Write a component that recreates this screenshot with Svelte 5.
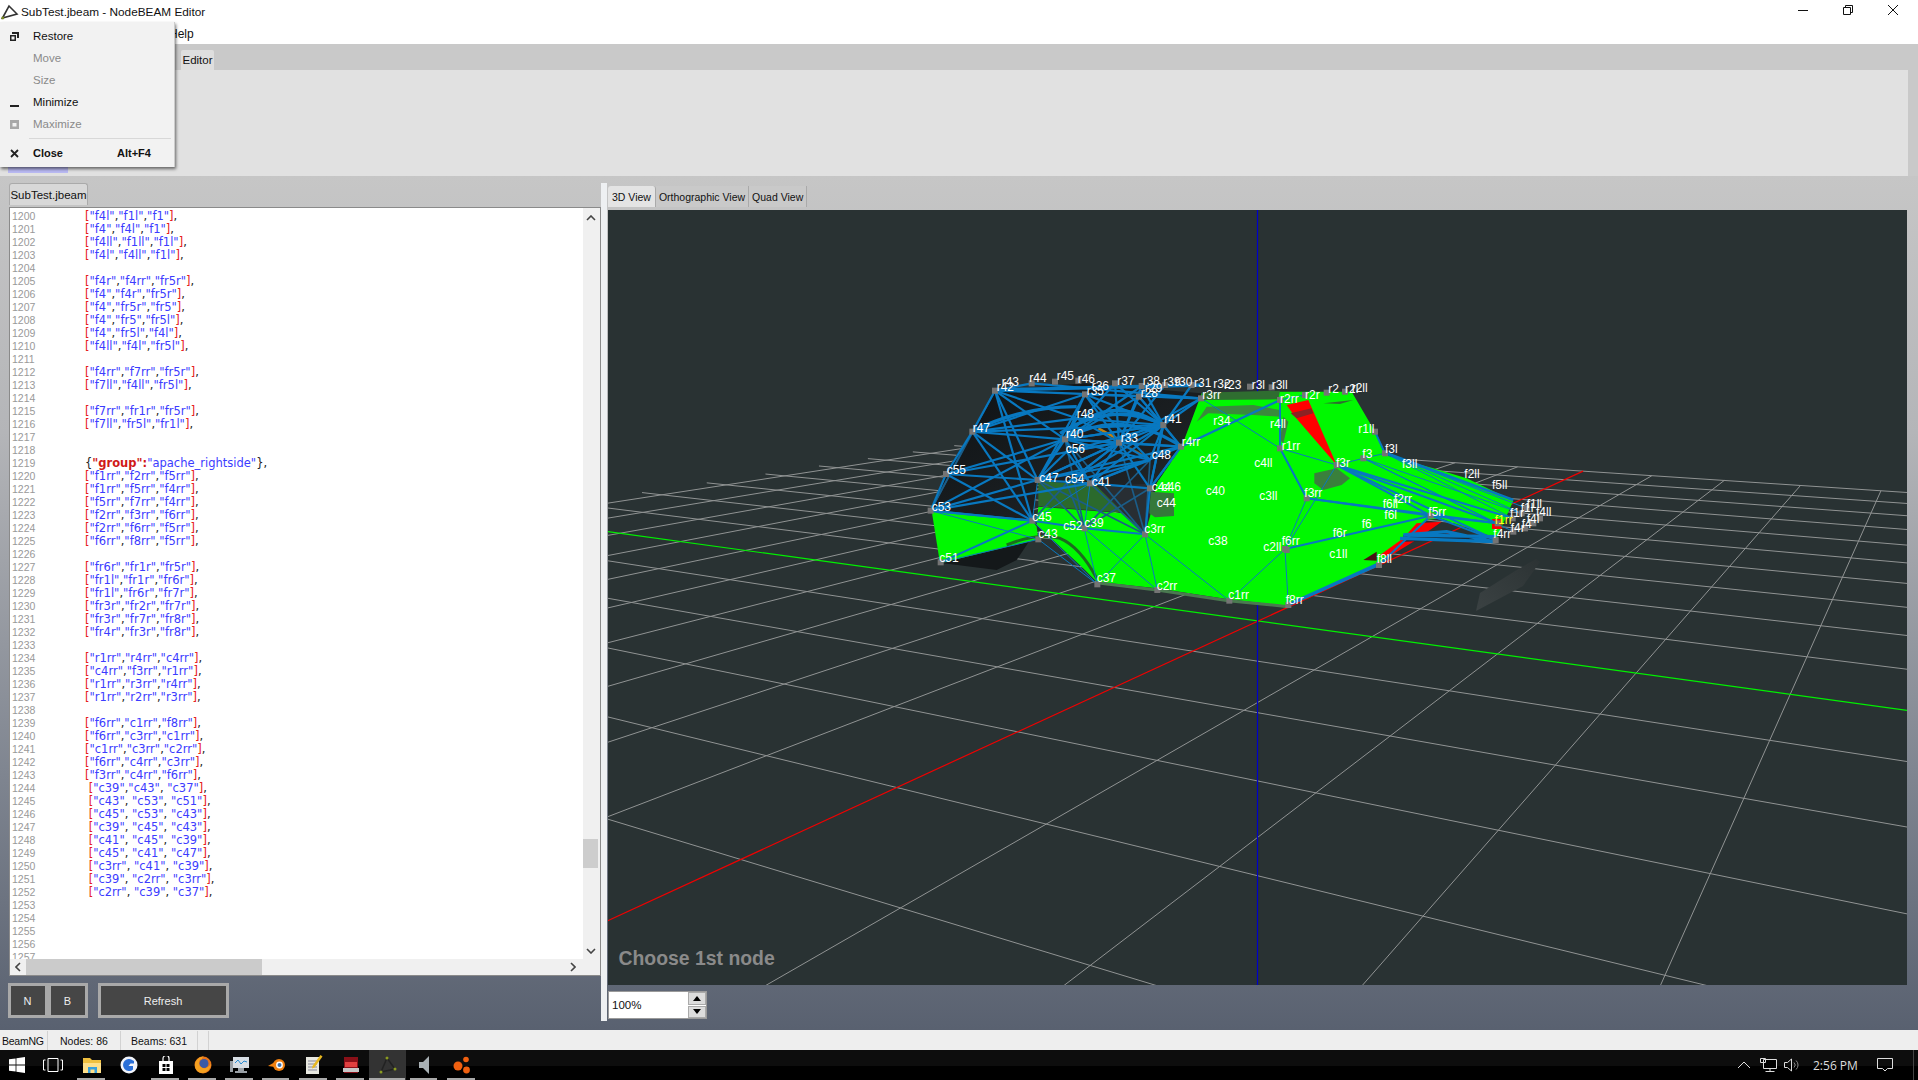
<script>
  const codeSrc = `["f4l","f1l","f1"],
["f4","f4l","f1"],
["f4ll","f1ll","f1l"],
["f4l","f4ll","f1l"],

["f4r","f4rr","fr5r"],
["f4","f4r","fr5r"],
["f4","fr5r","fr5"],
["f4","fr5","fr5l"],
["f4","fr5l","f4l"],
["f4ll","f4l","fr5l"],

["f4rr","f7rr","fr5r"],
["f7ll","f4ll","fr5l"],

["f7rr","fr1r","fr5r"],
["f7ll","fr5l","fr1l"],


{"group":"apache_rightside"},
["f1rr","f2rr","f5rr"],
["f1rr","f5rr","f4rr"],
["f5rr","f7rr","f4rr"],
["f2rr","f3rr","f6rr"],
["f2rr","f6rr","f5rr"],
["f6rr","f8rr","f5rr"],

["fr6r","fr1r","fr5r"],
["fr1l","fr1r","fr6r"],
["fr1l","fr6r","fr7r"],
["fr3r","fr2r","fr7r"],
["fr3r","fr7r","fr8r"],
["fr4r","fr3r","fr8r"],

["r1rr","r4rr","c4rr"],
["c4rr","f3rr","r1rr"],
["r1rr","r3rr","r4rr"],
["r1rr","r2rr","r3rr"],

["f6rr","c1rr","f8rr"],
["f6rr","c3rr","c1rr"],
["c1rr","c3rr","c2rr"],
["f6rr","c4rr","c3rr"],
["f3rr","c4rr","f6rr"],
 ["c39","c43", "c37"],
 ["c43", "c53", "c51"],
 ["c45", "c53", "c43"],
 ["c39", "c45", "c43"],
 ["c41", "c45", "c39"],
 ["c45", "c41", "c47"],
 ["c3rr", "c41", "c39"],
 ["c39", "c2rr", "c3rr"],
 ["c2rr", "c39", "c37"],




`;
  function tokens(s) {
    const out = [];
    const re = /("group":)|(\[|\])|("[^"]*")|([^\[\]"]+)/g;
    let m;
    while ((m = re.exec(s))) {
      if (m[1]) out.push(['grp', m[1]]);
      else if (m[2]) out.push(['br', m[2]]);
      else if (m[3]) out.push(['str', m[3]]);
      else out.push(['pl', m[4]]);
    }
    return out;
  }
  const rows = codeSrc.split('\n').map((t, k) => ({ n: 1200 + k, t: tokens(t) }));

  // ground plane projection, page pixels
  const ci = -0.08423, cj = -0.04558, bi = -165.85, bj = 51.46, di = -24.7, dj = -13.33;
  const P = (i, j) => {
    const w = 1 + ci * i + cj * j;
    return [(1258 + bi * i + bj * j) / w, (621 + di * i + dj * j) / w];
  };
  const seg = (f, a, b) => {
    const p = f(a), q = f(b);
    return { x1: p[0], y1: p[1], x2: q[0], y2: q[1] };
  };
  const minW = 0.07;
  function iLine(i) {
    let end = 10;
    const wEnd = 1 + ci * i + cj * end;
    if (wEnd < minW) end = (minW - 1 - ci * i) / cj;
    return seg((j) => P(i, j), -10.4, end);
  }
  function jLine(j) {
    let end = 10;
    const wEnd = 1 + ci * end + cj * j;
    if (wEnd < minW) end = (minW - 1 - cj * j) / ci;
    return seg((i) => P(i, j), -10, end);
  }
  const grid = [];
  for (let k = -10; k <= 10; k++) {
    if (k !== 0) {
      grid.push(iLine(k));
      grid.push(jLine(k));
    }
  }
  const greenAxis = iLine(0);
  const redAxis = jLine(0);

  // car, in units of 1/3 px from (900,350)
  const N = {
    r42:[285,122], r47:[217,245], c55:[138,372], c53:[92,482], c51:[122,637], c45:[397,512], c43:[415,568],
    c47:[413,390], r40:[495,268], r33:[657,278], r41:[790,225], r4rr:[843,290], c41:[570,400], c46:[750,415],
    c3rr:[735,553], c39:[553,535], c37:[592,703], c2rr:[772,720], c1rr:[988,752], f8rr:[1165,765], f6rr:[1155,597],
    f3rr:[1220,445], r1rr:[1140,295], r2rr:[1140,150], r3rr:[903,145], r35:[555,133], r28:[717,140], f3r:[1310,345],
    f5rr:[1592,497], f8ll:[1437,645], f4rr:[1787,570], f1:[1793,520], f3l:[1455,310], f3:[1390,325], f4:[1875,535],
    f4r:[1840,545], f4l:[1900,520], f4ll:[1920,505], f1l:[1865,490], f1ll:[1880,475], f1r:[1838,505], r44:[395,100],
    r45:[465,95], r46:[535,92], r37:[645,100], r30:[795,105], r31:[875,105], r3l:[1050,110], r3ll:[1115,112],
    r2r:[1215,135], r2:[1280,128], r2l:[1335,125], r1ll:[1425,245], c2ll:[1160,600], r38:[725,108],
    c48:[750,330], c54:[500,400], c56:[500,305], r48:[530,205]
  };
  const thick = [
    'r42-r3rr','r42-r47','r47-c55','c55-c53','r47-r40','r47-c47','r42-c47','r42-r40','r47-c45','c55-r40','c55-c47','c55-c45',
    'c53-c47','c53-r40','c53-c45','c47-r40','r35-r47','r35-c47','r35-r40','r35-r33','r40-r33','r40-c41','r40-r41','r40-r4rr',
    'r33-r41','r33-r4rr','r33-c41','r33-c46','r33-r28','r33-c47','r41-r4rr','r41-c41','r41-r40','r4rr-c46','r4rr-c41','r4rr-c47',
    'r28-r41','r28-r40','r28-r4rr','r35-r41','r3rr-r33','r3rr-r41','c47-r33','c47-c41','c41-c46','c46-r41','r42-c45','r4rr-r2rr',
    'r35-r3rr','r44-r42','r44-r3rr','r41-c46','r33-r37','r33-r38','r33-r30','r41-r37','r41-r38','r41-r31','r40-r37','r40-r38',
    'r40-r48','r48-r41','r48-r33','r48-c47','c56-r33','c56-r41','c56-c41','c56-c47','c48-r33','c48-r40','c48-r41','c48-c41','c48-c47',
    'c48-r35','c54-r33','c54-r41','c54-c48','r33-c54','r47-r48','r42-r48','r47-r41','c55-r33','c53-c41'
  ];
  const dim = [
    'c47-c3rr','c41-c3rr','c46-c3rr','r33-c3rr','r40-c39','r40-c3rr','c48-c3rr','c48-c39','c54-c39','c46-c39','c47-c39','r42-c53','r47-c53','c54-c45'
  ];
  const thin = [
    'c53-c43','c51-c45','c51-c43','c45-c37','c43-c37','c39-c2rr','c39-c37','c3rr-c37','c3rr-c2rr','c3rr-c1rr','c1rr-f6rr','f6rr-f8rr',
    'f6rr-f3rr','f3rr-r1rr','r1rr-r2rr','r1rr-f3r','r3rr-r1rr','f3r-f6rr','c47-c45','c41-c39','c41-c45','f3-f3r','f3-f3l',
    'f3l-r1ll','f3l-f1ll','f3l-f1l','f3-f1','f3-f1l','f3-f4r','f3l-f1r','r2rr-r2r'
  ];
  const bold = [
    'c53-c45','c45-c39','c39-c3rr','c51-c45','f6rr-f5rr','f3rr-f5rr','f3rr-f1','r1rr-f3rr','r2rr-r1rr','f3r-f5rr','f3r-f1','f3r-f4rr','f3r-f1r',
    'f5rr-f4rr','f5rr-f1','f8rr-f8ll','f8ll-f5rr','r1ll-f3l','c3rr-c46','c46-r4rr'
  ];
  const edge = (e) => {
    const [a, b] = e.split('-');
    return { x1: N[a][0], y1: N[a][1], x2: N[b][0], y2: N[b][1] };
  };
  const hidden = ['c48', 'c54', 'c56', 'r48'];
  const nodeKeys = Object.keys(N).filter((k) => !hidden.includes(k));

  const labels = [
    ['r43',305,95],['r42',290,110],['r44',388,82],['r45',470,78],['r46',533,85],['r36',575,107],['r35',560,122],['r37',652,92],
    ['r38',728,92],['r29',735,112],['r28',722,128],['r39',790,95],['r30',825,95],['r31',882,97],['r32',940,100],['r23',972,103],
    ['r3l',1055,103],['r3ll',1115,105],['r3rr',907,133],['r2rr',1140,147],['r2r',1215,133],['r2',1285,117],['r2l',1335,115],['r2ll',1355,113],
    ['r48',530,190],['r41',793,205],['r47',218,232],['r40',498,250],['r33',662,262],['r34',940,213],['r4ll',1110,222],['r4rr',845,275],
    ['r1rr',1145,288],['c56',497,295],['c48',755,314],['c42',898,325],['c4ll',1063,338],['f3r',1308,338],['c55',140,358],['c47',418,382],
    ['c54',495,385],['c41',575,395],['c44',770,458],['c44',755,410],['c46',785,410],['c40',917,422],['c3ll',1078,437],['f3rr',1213,428],
    ['c53',95,470],['c45',397,500],['c43',415,552],['c52',490,527],['c39',553,518],['c3rr',733,535],['c38',925,571],['f6rr',1145,571],
    ['c2ll',1090,590],['f6r',1298,549],['c1ll',1288,610],['c51',118,623],['c37',590,683],['c2rr',770,706],['c1rr',985,733],['f8rr',1157,748],
    ['r1ll',1375,235],['f3l',1455,297],['f3',1387,310],['f3ll',1506,340],['f2ll',1693,370],['f5ll',1776,405],['f2rr',1482,445],['f6ll',1448,462],
    ['f6l',1453,493],['f5rr',1585,485],['f6',1385,520],['f1ll',1880,462],['f1l',1862,472],['f1r',1830,487],['f4ll',1908,485],['f4l',1880,505],
    ['f4',1865,520],['f4r',1832,532],['f4rr',1780,550],['f8ll',1430,625]
  ];

  const menu = [
    { t: 'Restore', on: true, ic: 'restore' },
    { t: 'Move', on: false, ic: '' },
    { t: 'Size', on: false, ic: '' },
    { t: 'Minimize', on: true, ic: 'min' },
    { t: 'Maximize', on: false, ic: 'max' }
  ];
  const marks = [[77,19],[96,9],[151,28],[188,28],[225,28],[262,27],[299,28],[336,28],[369,36],[410,27],[447,28]];
</script>

<div class="win">
  <header class="title">
    <svg class="appicon" viewBox="0 0 18 16" width="18" height="16">
      <path d="M1.5 14 L8 2 L16 10 Z" fill="none" stroke="#333" stroke-width="1.6"/>
      <circle cx="1.8" cy="14" r="1.4" fill="#7a8a20"/>
    </svg>
    <span class="ttext">SubTest.jbeam - NodeBEAM Editor</span>
    <div class="wbtns">
      <svg viewBox="0 0 12 12" width="12" height="12"><path d="M1 6.5h10" stroke="#111"/></svg>
      <svg viewBox="0 0 12 12" width="12" height="12"><path d="M1.5 3.5h7v7h-7zM3.5 3.5v-2h7v7h-2" fill="none" stroke="#111"/></svg>
      <svg viewBox="0 0 12 12" width="12" height="12"><path d="M1 1l10 10M11 1L1 11" stroke="#111"/></svg>
    </div>
  </header>
  <nav class="menubar"><span>Help</span></nav>
  <div class="toptabs"><span class="toptab">Editor</span></div>
  <div class="ribbon"><i class="lilac"></i></div>

  <main class="main">
    <section class="left">
      <div class="doctabs"><span class="doctab">SubTest.jbeam</span></div>
      <div class="editor">
        <div class="editmain">
          <div class="code">
            {#each rows as r}
              <div class="row"><span class="ln">{r.n}</span><span class="src">{#each r.t as s}<span class={s[0]}>{s[1]}</span>{/each}</span></div>
            {/each}
          </div>
          <div class="vbar">
            <svg viewBox="0 0 10 6" width="10" height="6"><path d="M1 5l4-4 4 4" fill="none" stroke="#444" stroke-width="1.6"/></svg>
            <i class="vspace"></i>
            <i class="vthumb"></i>
            <i class="vend"></i>
            <svg viewBox="0 0 10 6" width="10" height="6"><path d="M1 1l4 4 4-4" fill="none" stroke="#444" stroke-width="1.6"/></svg>
          </div>
        </div>
        <div class="hbar">
          <svg viewBox="0 0 6 10" width="6" height="10"><path d="M5 1L1 5l4 4" fill="none" stroke="#444" stroke-width="1.6"/></svg>
          <i class="hthumb"></i>
          <svg viewBox="0 0 6 10" width="6" height="10"><path d="M1 1l4 4-4 4" fill="none" stroke="#444" stroke-width="1.6"/></svg>
        </div>
      </div>
      <div class="actions">
        <div class="nb"><button>N</button><button>B</button></div>
        <button class="refresh">Refresh</button>
      </div>
    </section>
    <div class="split"></div>
    <section class="right">
      <div class="viewtabs">
        <span class="vt active">3D View</span><span class="vt">Orthographic View</span><span class="vt">Quad View</span>
      </div>
      <div class="viewport">
        <svg class="scene" viewBox="608 210 1299 775" width="1299" height="775">
          <defs>
            <linearGradient id="hull" x1="0" y1="0" x2="1" y2="1">
              <stop offset="0" stop-color="#0e1214"/><stop offset="0.6" stop-color="#1b1f22"/><stop offset="1" stop-color="#262c30"/>
            </linearGradient>
            <linearGradient id="shade" x1="0" y1="1" x2="1" y2="0">
              <stop offset="0" stop-color="#3b4243"/><stop offset="1" stop-color="#2c3334"/>
            </linearGradient>
          </defs>
          {#each grid as l}
            <line class="gl" x1={l.x1} y1={l.y1} x2={l.x2} y2={l.y2}/>
          {/each}
          <line class="ax" stroke="#00f000" x1={greenAxis.x1} y1={greenAxis.y1} x2={greenAxis.x2} y2={greenAxis.y2}/>
          <line class="ax" stroke="#f00000" x1={redAxis.x1} y1={redAxis.y1} x2={redAxis.x2} y2={redAxis.y2}/>
          <line class="ax" stroke="#0000c8" x1="1257.5" y1="210" x2="1257.5" y2="985"/>
          <polygon points="1480,593 1515,571 1536,559 1540,562 1523,586 1476,611" fill="url(#shade)"/>

          <g transform="translate(900 350) scale(0.33333)">
            <polygon points="130,640 320,580 390,570 350,630 290,660" fill="#14181a"/>
            <polygon points="285,120 555,100 905,130 845,290 770,400 735,550 670,490 590,410 415,390 395,510 95,482 135,370 215,245" fill="url(#hull)"/>
            <polygon points="590,410 770,400 735,550 670,490" fill="#282e33"/>
            <polygon points="95,482 395,510 410,530 415,568 120,640" fill="#00f800"/>
            <polygon points="905,130 1140,125 1270,125 1355,125 1425,245 1455,315 1600,355 1700,385 1840,452 1790,565 1620,505 1580,510 1440,640 1165,768 985,748 770,715 590,695 545,650 410,525 415,470 670,490 735,550 750,500 770,400 845,290" fill="#00f800"/>
            <polygon points="415,392 590,408 670,488 415,468" fill="#2b6a2c"/>
            <polygon points="752,425 822,430 822,498 765,502 748,490" fill="#35793a"/>
            <polygon points="890,215 920,170 1060,165 1140,180 1140,200 1060,195 925,190" fill="#3a8a3c"/>
            <polygon points="905,128 1140,122 1135,148 905,150" fill="#2f6d30"/>
            <polygon points="1243,370 1310,355 1350,385 1325,405 1270,420 1243,400" fill="#3a803c"/>
            <polygon points="1140,270 1150,200 1165,215 1150,280" fill="#3e7d40"/>
            <polygon points="1270,160 1360,150 1320,162" fill="#2f6d30"/>
            <polygon points="1160,165 1225,150 1310,345 1185,200" fill="#ff0000"/>
            <polygon points="1172,190 1234,175 1240,190 1190,205" fill="#8c2224"/>
            <polygon points="1440,615 1510,565 1550,520 1625,515 1540,575 1470,618" fill="#ff0000"/>
            <polygon points="1390,630 1430,605 1430,632" fill="#4a1015"/>
            <polygon points="1510,555 1620,548 1780,565 1510,575" fill="#1a2a38"/>
            <rect x="1776" y="507" width="29" height="30" fill="#ff0000"/>
            <path d="M320,585 Q410,548 480,565 Q540,590 590,685" fill="none" stroke="#1c6b1e" stroke-width="9"/>
            <polyline points="590,698 770,720 985,752 1165,770" fill="none" stroke="#4a7a50" stroke-width="9"/>
            <line x1="595" y1="235" x2="650" y2="265" stroke="#c08010" stroke-width="8"/>
            <line x1="690" y1="295" x2="745" y2="325" stroke="#8a6015" stroke-width="7"/>

            {#each dim as e}
              {@const l = edge(e)}
              <line stroke="#1b5d88" stroke-width="5" x1={l.x1} y1={l.y1} x2={l.x2} y2={l.y2}/>
            {/each}
            {#each thick as e}
              {@const l = edge(e)}
              <line class="b" stroke-width="6.5" x1={l.x1} y1={l.y1} x2={l.x2} y2={l.y2}/>
            {/each}
            <path d="M215,245 Q360,170 530,170 M480,250 Q640,150 790,225 M500,265 Q660,170 845,290 M285,120 L905,105 M555,210 Q650,150 770,215" fill="none" stroke="#0878c0" stroke-width="10"/>
            {#each thin as e}
              {@const l = edge(e)}
              <line class="b" stroke-width="3" x1={l.x1} y1={l.y1} x2={l.x2} y2={l.y2}/>
            {/each}
            {#each bold as e}
              {@const l = edge(e)}
              <line class="b" stroke-width="6" x1={l.x1} y1={l.y1} x2={l.x2} y2={l.y2}/>
            {/each}
            <polyline points="1500,565 1780,575 1640,545 1510,555 1790,560" fill="none" stroke="#0878c0" stroke-width="10"/>
            <line class="b" stroke-width="10" x1="1170" y1="762" x2="1440" y2="640"/>
            <line class="b" stroke-width="8" x1="1460" y1="310" x2="1840" y2="450"/>

            {#each nodeKeys as k}
              <rect class="nd" x={N[k][0] - 9} y={N[k][1] - 9} width="18" height="18"/>
            {/each}
            {#each labels as l}
              <text class="lb" x={l[1]} y={l[2] + 13}>{l[0]}</text>
            {/each}
            <text class="lb yel" x="1784" y="521">f1rr</text>
          </g>
          <text class="hint" x="618.5" y="965">Choose 1st node</text>
        </svg>
      </div>
      <div class="spin">
        <span class="spinv">100%</span>
        <div class="spinb">
          <span><svg viewBox="0 0 8 5" width="8" height="5"><path d="M4 0l4 5H0z"/></svg></span>
          <span><svg viewBox="0 0 8 5" width="8" height="5"><path d="M0 0h8L4 5z"/></svg></span>
        </div>
      </div>
    </section>
  </main>

  <footer class="status">
    <span class="st s1">BeamNG</span><span class="st s2">Nodes: 86</span><span class="st s3">Beams: 631</span><span class="st s4"></span>
  </footer>

  <div class="taskbar">
    <div class="tleft">
      <div class="slot"><svg viewBox="0 0 16 16" width="16" height="16"><path fill="#fff" d="M0 2.3l6.6-.9v6.2H0zM7.4 1.3L16 0v7.6H7.4zM0 8.4h6.6v6.2L0 13.7zM7.4 8.4H16V16l-8.6-1.2z"/></svg></div>
      <div class="slot wide"><svg viewBox="0 0 22 16" width="22" height="16"><path fill="none" stroke="#fff" d="M6 1.5h10v13H6zM3.5 3H1.5v10h2M18.5 3h2v10h-2"/></svg></div>
      <div class="slot"><svg viewBox="0 0 20 17" width="20" height="17"><path fill="#f0c040" d="M1 1h7l2 2h9v13H1z"/><path fill="#ffe08a" d="M1 6h18v10H1z"/><path fill="#3aa0dc" d="M6 10h9v6h-2.5v-3.5h-4V16H6z"/></svg></div>
      <div class="slot"><svg viewBox="0 0 18 18" width="18" height="18"><circle cx="9" cy="9" r="8.5" fill="#f2f4fa"/><path fill="#2a6fd8" d="M13 4.5a6 6 0 1 0 0 9V10H8.5l2-2.5H14V5z"/></svg></div>
      <div class="slot"><svg viewBox="0 0 16 18" width="16" height="18"><path fill="#fff" d="M1 5h14v13H1z"/><path fill="none" stroke="#fff" stroke-width="1.2" d="M5 5V2.5a3 3 0 0 1 6 0V5"/><path fill="#000" d="M4.5 8h3v3h-3zM8.5 8h3v3h-3zM4.5 12h3v3h-3zM8.5 12h3v3h-3z"/></svg></div>
      <div class="slot"><svg viewBox="0 0 18 18" width="18" height="18"><circle cx="9" cy="9" r="8.5" fill="#e8741a"/><circle cx="10" cy="7.500" r="4.500" fill="#3a5aa8"/><path fill="#f4a020" d="M1 8c1-5 5-7.500 9-7.500-1.500.5-2 1.500-2 2.500-2 .5-3.500 2-3 5 .5 3 4 5 7 4 2-.7 4-2.500 5-4.500 0 5-4 9.500-8.500 9.500C4 17.500 .5 13 1 8z"/></svg></div>
      <div class="slot"><svg viewBox="0 0 20 18" width="20" height="18"><path fill="#d8dee4" d="M3 1h16v11H3z"/><path fill="none" stroke="#2a8ad0" d="M5 7l3-3 3 4 3-3 3 1"/><path fill="#9aa0a6" d="M0 5h3v11H0zM8 12h6v3h3v2H5v-2h3z"/></svg></div>
      <div class="slot"><svg viewBox="0 0 20 16" width="20" height="16"><circle cx="12" cy="8" r="6" fill="#f08010"/><circle cx="12.500" cy="8" r="3.400" fill="#fff"/><circle cx="12.500" cy="8" r="2" fill="#3a70b0"/><path fill="#f08010" d="M1 9l7-4v5z"/></svg></div>
      <div class="slot"><svg viewBox="0 0 18 20" width="18" height="20"><path fill="#e8e8e0" d="M1 2h13v17H1z"/><path stroke="#889" d="M3 6h9M3 9h9M3 12h9M3 15h9"/><path fill="#e8b820" d="M15.500 0l2 1.500-8 11-2.500 1 .5-2.500z"/></svg></div>
      <div class="slot"><svg viewBox="0 0 18 18" width="18" height="18"><path fill="#8a1018" d="M2 1h14v16H2z"/><path fill="#c8c8c8" d="M1 12h16v4H1z"/><path fill="#e04040" d="M3 6h12v5H3z"/></svg></div>
      <div class="slot act"><svg viewBox="0 0 18 18" width="18" height="18"><path d="M2 16L8 2l8 11z" fill="none" stroke="#222" stroke-width="1.500"/><circle cx="2" cy="16" r="1.500" fill="#8a9a20"/><circle cx="8" cy="2" r="1.500" fill="#8a9a20"/><circle cx="16" cy="13" r="1.500" fill="#8a9a20"/></svg></div>
      <div class="slot"><svg viewBox="0 0 12 18" width="12" height="18"><path fill="#a8b0b4" d="M0 6h4l6-6v18l-6-6H0z"/></svg></div>
      <div class="slot"><svg viewBox="0 0 18 18" width="18" height="18"><circle cx="5" cy="10" r="4.500" fill="#f06010"/><circle cx="13" cy="3.500" r="2.800" fill="#f06010"/><circle cx="13.500" cy="14" r="3.400" fill="#f06010"/></svg></div>
    </div>
    <div class="tray">
      <svg class="t1" viewBox="0 0 14 8" width="14" height="8"><path d="M1 7l6-6 6 6" fill="none" stroke="#ddd"/></svg>
      <svg class="t2" viewBox="0 0 17 14" width="17" height="14"><path d="M3.500 1.500h13v9h-13zM10 10.500v2.500M5.500 13.500h9M.5 .5h5v4h-5z" fill="#000" stroke="#ddd"/></svg>
      <svg class="t3" viewBox="0 0 16 14" width="16" height="14"><path d="M.5 4.500h3l4-3.500v12l-4-3.500h-3z" fill="none" stroke="#ddd"/><path d="M10 4.500a3.500 3.500 0 0 1 0 5M12 2.500a6 6 0 0 1 0 9" fill="none" stroke="#888"/></svg>
      <span class="clock">2:56 PM</span>
      <svg class="t4" viewBox="0 0 16 14" width="16" height="14"><path d="M.5 .5h15v10h-5l-2.500 2.500-2.500-2.500h-5z" fill="none" stroke="#ddd"/></svg>
      <i class="tdiv"></i>
    </div>
    {#each marks as m}
      <i class="mark" style="left:{m[0]}px;width:{m[1]}px"></i>
    {/each}
  </div>

  <div class="sysmenu">
    {#each menu as m}
      <div class="mi" class:off={!m.on}>
        <span class="mic">
          {#if m.ic === 'restore'}<svg viewBox="0 0 9 9" width="9" height="9"><path d="M0 3h6v6H0z" fill="#222"/><path d="M2 0h7v6H7V2H2z" fill="#222"/><path d="M1.500 4.500h3v3h-3z" fill="#f2f2f2"/></svg>
          {:else if m.ic === 'min'}<svg viewBox="0 0 9 9" width="9" height="9"><path d="M0 7h9v2H0z" fill="#222"/></svg>
          {:else if m.ic === 'max'}<svg viewBox="0 0 9 9" width="9" height="9"><path d="M0 0h9v9H0zM2.500 3v3.500h4V3z" fill="#a8a8a8" fill-rule="evenodd"/></svg>{/if}
        </span>
        <span>{m.t}</span>
      </div>
    {/each}
    <div class="msep"></div>
    <div class="mi close">
      <span class="mic"><svg viewBox="0 0 9 9" width="9" height="9"><path d="M1 1l7 7M8 1L1 8" stroke="#222" stroke-width="1.800"/></svg></span>
      <span class="cl">Close</span><span>Alt+F4</span>
    </div>
  </div>
</div>

<style>
  :global(body) { margin: 0; background: #fff; overflow: hidden; }
  .win { position: relative; width: 1918px; height: 1080px; display: flex; flex-direction: column; overflow: hidden; font: 11px "Liberation Sans", Arial, sans-serif; color: #111; }
  i { display: block; }
  .title { height: 22px; flex: none; display: flex; align-items: center; background: #fff; padding-top: 2px; box-sizing: border-box; }
  .appicon { margin-left: 1px; flex: none; }
  .ttext { margin-left: 2px; font-size: 11.8px; }
  .wbtns { margin-left: auto; display: flex; gap: 33px; margin-right: 19px; margin-top: -4px; }
  .menubar { height: 22px; flex: none; background: #fff; display: flex; align-items: center; padding: 2px 0 0 169px; box-sizing: border-box; font-size: 12px; }
  .toptabs { height: 26px; flex: none; background: #c9c9c9; display: flex; align-items: flex-end; padding-left: 181px; box-sizing: border-box; }
  .toptab { height: 20px; width: 33px; background: #dedede; border-radius: 2px 2px 0 0; display: flex; align-items: center; justify-content: center; font-size: 11.5px; }
  .ribbon { height: 106px; flex: none; background: #c9c9c9; position: relative; }
  .ribbon::before { content: ""; position: absolute; left: 0; top: 0; bottom: 0; right: 10px; background: #e1e1e1; }
  .lilac { position: absolute; left: 8px; top: 96px; width: 60px; height: 7px; background: #b9b9f2; }
  .main { flex: 1; min-height: 0; display: flex; background: linear-gradient(#c6c6c6 0%, #b4b5b8 30%, #7f8590 70%, #596170 100%); }
  .left { width: 601px; flex: none; padding-left: 9px; box-sizing: border-box; display: flex; flex-direction: column; }
  .doctabs { height: 31px; flex: none; display: flex; align-items: flex-end; }
  .doctab { height: 22px; width: 79px; margin-bottom: 2px; background: #d8d8d8; border: 1px solid #aaa; border-bottom: 0; border-radius: 3px 3px 0 0; box-sizing: border-box; display: flex; align-items: center; justify-content: center; font-size: 11.5px; }
  .editor { width: 592px; height: 769px; flex: none; background: #fff; border: 1px solid #8a8a8a; box-sizing: border-box; display: flex; flex-direction: column; overflow: hidden; }
  .editmain { flex: 1; min-height: 0; display: flex; }
  .code { flex: 1; overflow: hidden; padding-top: 2px; }
  .row { height: 13px; line-height: 13px; display: flex; white-space: pre; }
  .ln { width: 75px; padding-left: 2px; box-sizing: border-box; color: #999; font: 10.5px/13px "Liberation Sans", sans-serif; flex: none; }
  .src { font: 11.5px/13px "DejaVu Sans", sans-serif; }
  .br { color: #e62020; }
  .str { color: #3c3cff; }
  .pl { color: #222; }
  .grp { color: #d01818; font-weight: bold; }
  .vbar { width: 17px; flex: none; background: #f0f0f0; display: flex; flex-direction: column; align-items: center; padding: 7px 2px 5px 0; box-sizing: border-box; }
  .vspace { height: 618px; flex: none; }
  .vthumb { width: 15px; height: 29px; flex: none; background: #cdcdcd; }
  .vend { flex: 1; }
  .hbar { height: 16px; flex: none; background: #f0f0f0; display: flex; align-items: center; padding: 0 24px 0 5px; }
  .hthumb { width: 236px; height: 16px; background: #cbcbcb; margin-left: 5px; margin-right: auto; }
  .actions { display: flex; gap: 10px; margin-top: 7px; margin-left: -1px; }
  button { font: 11px "Liberation Sans", sans-serif; color: #eee; background: #464646; border: 3px solid #a9a9a9; padding: 0 1px 0 0; height: 35px; margin: 0; border-radius: 0; }
  .nb { display: flex; gap: 0; }
  .nb button { width: 40px; }
  .refresh { width: 131px; }
  .split { width: 6px; flex: none; margin-top: 7px; margin-bottom: 9px; background: #eef0f2; }
  .right { width: 1300px; flex: none; margin-left: 1px; display: flex; flex-direction: column; }
  .viewtabs { height: 34px; flex: none; display: flex; align-items: flex-end; padding-bottom: 3px; box-sizing: border-box; }
  .vt { height: 21px; padding: 0 3px; display: flex; align-items: center; font-size: 10.5px; background: #c9c9c9; border-right: 1px solid #aaa; }
  .vt.active { background: #e4e4e4; border-radius: 3px 3px 0 0; padding: 0 4px; }
  .viewport { width: 1299px; height: 775px; flex: none; background: #293233; overflow: hidden; }
  .scene { display: block; }
  .gl { stroke: #909393; stroke-width: 1; }
  .ax { stroke-width: 1.2; }
  .b { stroke: #0878c0; }
  .nd { fill: #747474; }
  .lb { font: 36px "Liberation Sans", sans-serif; fill: #fff; }
  .yel { fill: #ffff20; }
  .hint { font: bold 19.4px "Liberation Sans", sans-serif; fill: #8a8a8a; }
  .spin { margin-top: 6px; width: 99px; height: 28px; background: #fff; border: 1px solid #9a9a9a; box-sizing: border-box; display: flex; align-items: center; }
  .spinv { padding-left: 3px; font-size: 11.5px; flex: 1; }
  .spinb { width: 18px; height: 100%; display: flex; flex-direction: column; gap: 1px; }
  .spinb span { flex: 1; background: #dcdcdc; border: 1px solid #aaa; box-sizing: border-box; display: flex; align-items: center; justify-content: center; }
  .status { height: 20px; flex: none; background: #eee; display: flex; font-size: 10.5px; align-items: stretch; padding-top: 1px; box-sizing: border-box; }
  .st { display: flex; align-items: center; border-right: 1px solid #d2d2d2; box-sizing: border-box; }
  .s1 { width: 48px; padding-left: 2px; letter-spacing: -0.25px; }
  .s2 { width: 73px; padding-left: 12px; }
  .s3 { width: 77px; padding-left: 10px; }
  .s4 { width: 11px; }
  .taskbar { height: 30px; flex: none; position: relative; background: linear-gradient(#0d0d0d 0, #0d0d0d 53%, #000 53%); display: flex; justify-content: space-between; color: #ddd; }
  .tleft { display: flex; padding-left: 1px; }
  .slot { width: 37px; height: 30px; display: flex; align-items: center; justify-content: center; flex: none; }
  .slot:first-child { width: 32px; }
  .slot.wide { width: 40px; }
  .act { background: #333; }
  .tray { display: flex; align-items: center; position: relative; width: 180px; }
  .tray > * { position: absolute; }
  .t1 { left: -1px; top: 11px; }
  .t2 { left: 22px; top: 8px; }
  .t3 { left: 46px; top: 8px; }
  .clock { left: 75px; top: 7px; font: 12px "Open Sans", sans-serif; color: #ddd; }
  .t4 { left: 139px; top: 8px; }
  .tdiv { left: 175px; top: 0; height: 30px; width: 1px; background: #444; }
  .mark { position: absolute; bottom: 0; height: 2px; background: #a8a8a8; }
  .sysmenu { position: absolute; left: 0; top: 22px; width: 175px; height: 145px; background: #f2f2f2; box-sizing: border-box; box-shadow: 1px 2px 3px rgba(0,0,0,.55); border-right: 1px solid #ccc; padding-top: 3px; }
  .mi { height: 22px; display: flex; align-items: center; font-size: 11.5px; }
  .mic { width: 33px; padding-left: 10px; box-sizing: border-box; flex: none; display: flex; }
  .off { color: #8a8a8a; }
  .msep { height: 1px; background: #d8d8d8; margin: 3px 3px 3px 29px; }
  .close { font-weight: bold; font-size: 11px; }
  .cl { width: 84px; }
</style>
